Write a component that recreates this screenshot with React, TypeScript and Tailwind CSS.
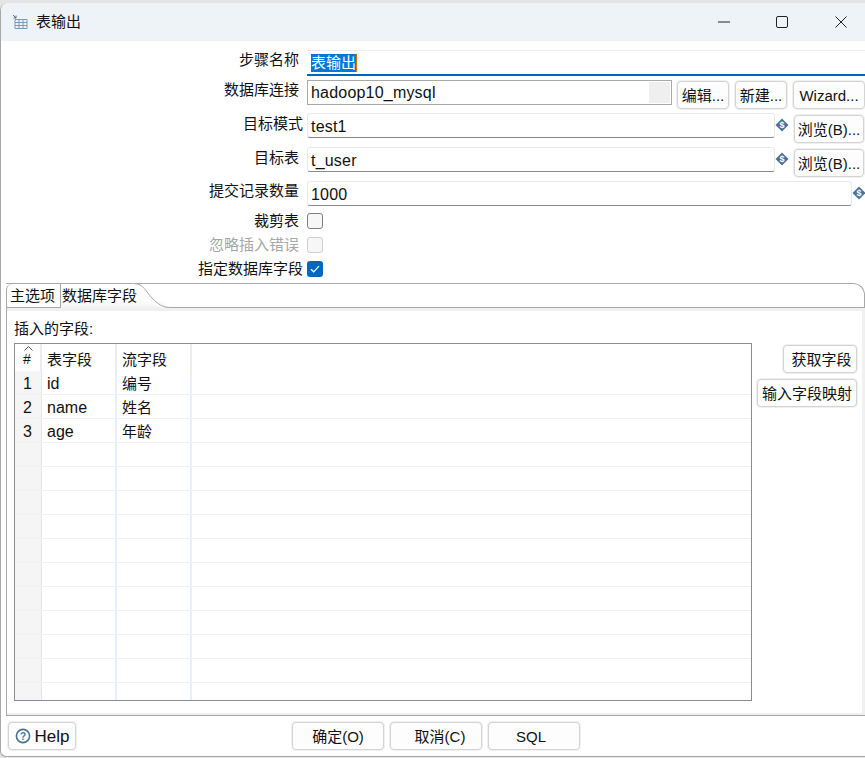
import React from "react";

const font = "font-['Liberation_Sans','Noto_Sans_CJK_SC',sans-serif]";

function Btn({ children, className = "" }: { children: React.ReactNode; className?: string }) {
  return (
    <button className={`h-[28px] shrink-0 rounded-[4px] border border-[#d4d4d4] bg-[#fdfdfd] text-[15px] text-[#111] leading-none whitespace-nowrap shadow-[0_0_0_1px_#f0f0f0] ${className}`}>
      {children}
    </button>
  );
}

function VarIcon({ className = "" }: { className?: string }) {
  return (
    <svg width="14" height="14" viewBox="0 0 14 14" className={`shrink-0 ${className}`}>
      <path d="M7 0.5 L13.5 7 L7 13.5 L0.5 7 Z" fill="#4a7396" />
      <text x="7" y="10.2" textAnchor="middle" fontSize="9" fontWeight="700" fill="#fff" fontFamily="Liberation Sans">$</text>
    </svg>
  );
}

function Label({ children, className = "pr-[8px]", muted = false }: { children: React.ReactNode; className?: string; muted?: boolean }) {
  return (
    <div className={`w-[306px] shrink-0 text-right text-[15px] leading-[20px] ${className} ${muted ? "text-[#a6a6a6]" : "text-[#111]"}`}>
      {children}
    </div>
  );
}

function Field({ value, className = "" }: { value: string; className?: string }) {
  return (
    <div className={`h-[25px] shrink-0 rounded-[3px] border border-[#e8e8e8] border-b-[#8a8a8a] bg-white pl-[3px] text-[16px] leading-[25px] tracking-[0.2px] text-[#111] ${className}`}>
      {value}
    </div>
  );
}

function Check({ state }: { state: "off" | "disabled" | "on" }) {
  if (state === "on") {
    return (
      <div className="flex h-[16px] w-[16px] items-center justify-center rounded-[3px] bg-[#0067c0]">
        <svg width="10" height="8" viewBox="0 0 10 8" fill="none" stroke="#fff" strokeWidth="1.2">
          <path d="M1 4.2 L3.7 6.8 L9 1.2" />
        </svg>
      </div>
    );
  }
  return (
    <div className={`h-[16px] w-[16px] rounded-[3px] border bg-[#f7f7f7] ${state === "off" ? "border-[#7f7f7f]" : "border-[#cfcfcf]"}`} />
  );
}

const rows = [
  ["1", "id", "编号"],
  ["2", "name", "姓名"],
  ["3", "age", "年龄"],
  ...Array.from({ length: 11 }, () => ["", "", ""]),
];

function Grid() {
  return (
    <div className="ml-[7px] h-[358px] w-[738px] shrink-0 overflow-hidden border border-[#8c8c96] bg-white">
      <div className="flex h-[27px] text-[15px] leading-[27px] text-[#111]">
        <div className="relative w-[27px] border-r-2 border-[#ececec] pl-[8px] pt-[2px] text-[14px]">
          <svg width="9" height="5" viewBox="0 0 9 5" fill="none" stroke="#555" className="absolute left-[9px] top-[2px]">
            <path d="M0.5 4.5 L4.5 0.5 L8.5 4.5" />
          </svg>
          #
        </div>
        <div className="w-[75px] border-r-2 border-[#ececec] pl-[5px] pt-[2px]">表字段</div>
        <div className="w-[75px] border-r-2 border-[#ececec] pl-[5px] pt-[2px]">流字段</div>
      </div>
      {rows.map((r, i) => (
        <div key={i} className="flex h-[24px] border-b border-[#edf1f5] text-[16px] leading-[25px] text-[#111]">
          <div className="w-[27px] border-r border-[#e6e6e6] bg-[#f5f5f5] pl-[8px]">{r[0]}</div>
          <div className="w-[75px] border-r-2 border-[#e9eff8] pl-[5px]">{r[1]}</div>
          <div className="w-[75px] border-r-2 border-[#e9eff8] pl-[5px] text-[15px]">{r[2]}</div>
        </div>
      ))}
    </div>
  );
}

export default function App() {
  return (
    <div className={`${font} h-[758px] w-[865px] overflow-hidden bg-[#e4e4e4] pt-[3px]`}>
      <div className="flex h-[754px] flex-col overflow-hidden rounded-tl-[8px] rounded-bl-[6px] border-b border-l border-[#a8a8a8] bg-white">
        <div className="flex h-[38px] shrink-0 items-center bg-[#eef3f8]">
          <svg width="16" height="16" viewBox="0 0 16 16" fill="none" className="ml-[11px]">
            <path d="M3 5.5 H15 V14.5 H3 Z M3 8.5 H15 M3 11.5 H15 M7 5.5 V14.5 M11 5.5 V14.5" stroke="#7d9ab5" strokeWidth="1" />
            <path d="M1 1 L4 4 M4 1.5 V4 H1.5" stroke="#4a6f8f" strokeWidth="1" />
          </svg>
          <span className="ml-[8px] text-[15px] text-[#111]">表输出</span>
          <svg width="12" height="2" viewBox="0 0 12 2" className="ml-auto">
            <rect width="12" height="1" y="0.5" fill="#222" />
          </svg>
          <svg width="12" height="12" viewBox="0 0 12 12" fill="none" className="ml-[46px]">
            <rect x="0.5" y="0.5" width="11" height="11" rx="1.5" stroke="#222" />
          </svg>
          <svg width="12" height="12" viewBox="0 0 12 12" fill="none" className="ml-[47px] mr-[18px]">
            <path d="M0.5 0.5 L11.5 11.5 M11.5 0.5 L0.5 11.5" stroke="#222" />
          </svg>
        </div>

        <div className="flex h-[39px] shrink-0 items-start pt-[9px]">
          <Label>步骤名称</Label>
          <div className="h-[26px] flex-1 border-t border-[#eeeeee] border-b-2 border-b-[#0067c0] pl-[4px] pt-[3px] text-[15px] leading-[18px]">
            <span className="inline-block border-r border-[#e07000] bg-[#0078d7] text-white">表输出</span>
          </div>
        </div>

        <div className="flex h-[33px] shrink-0 items-start">
          <Label>数据库连接</Label>
          <div className="flex h-[25px] w-[365px] shrink-0 items-stretch border border-[#a9a9a9] bg-white">
            <span className="flex-1 pl-[3px] text-[16px] leading-[23px] tracking-[0.2px] text-[#111]">hadoop10_mysql</span>
            <span className="my-[1px] mr-[1px] w-[21px] bg-[#efefef]" />
          </div>
          <Btn className="ml-[5px] mt-[1px] w-[52px]">编辑...</Btn>
          <Btn className="ml-[6px] mt-[1px] w-[52px]">新建...</Btn>
          <Btn className="ml-[6px] mt-[1px] w-[72px]">Wizard...</Btn>
        </div>

        <div className="flex h-[34px] shrink-0 items-start">
          <Label className="mt-[1px] pr-[4px]">目标模式</Label>
          <Field value="test1" className="w-[468px]" />
          <VarIcon className="mt-[5px]" />
          <Btn className="ml-[5px] mt-[2px] w-[70px]">浏览(B)...</Btn>
        </div>

        <div className="flex h-[34px] shrink-0 items-start">
          <Label className="mt-[1px] pr-[8px]">目标表</Label>
          <Field value="t_user" className="w-[468px]" />
          <VarIcon className="mt-[5px]" />
          <Btn className="ml-[5px] mt-[2px] w-[70px]">浏览(B)...</Btn>
        </div>

        <div className="flex h-[32px] shrink-0 items-start">
          <Label>提交记录数量</Label>
          <Field value="1000" className="w-[545px]" />
          <VarIcon className="mt-[5px]" />
        </div>

        <div className="flex h-[24px] shrink-0 items-start">
          <Label className="mt-[-2px] pr-[8px]">裁剪表</Label>
          <Check state="off" />
        </div>
        <div className="flex h-[24px] shrink-0 items-start">
          <Label className="mt-[-2px] pr-[8px]" muted>忽略插入错误</Label>
          <Check state="disabled" />
        </div>
        <div className="flex h-[22px] shrink-0 items-start">
          <Label className="mt-[-2px] pr-[4px]">指定数据库字段</Label>
          <Check state="on" />
        </div>

        <div className="ml-[5px] flex min-h-0 flex-1 flex-col">
          <div className="relative flex h-[25px] shrink-0 items-end rounded-tr-[12px] border-t border-r border-[#a8a8a8] text-[15px] leading-[24px] text-[#111]">
            <div className="h-[24px] w-[55px] shrink-0 rounded-tl-[6px] border-l border-r border-b border-[#a8a8a8] pl-[3px]">主选项</div>
            <div className="h-[24px] w-[104px] shrink-0 bg-gradient-to-b from-white from-70% to-[#f0f0f0] pl-[1px]">数据库字段</div>
            <div className="flex-1 self-end border-b border-[#a8a8a8]" />
            <svg width="40" height="25" viewBox="0 0 40 25" fill="none" className="absolute left-[125px] top-[-1px]">
              <path d="M1 0.5 C10 1 14 8 20 15 C26 22 30 24 39 24.5 H40 V25 H39 C28 25 22 22 16 15 C10 8 6 2 1 1 Z" fill="#fff" />
              <path d="M3 0.5 C13 1 15 9 21 15 C27 21 31 24.5 40 24.5" stroke="#a8a8a8" />
            </svg>
          </div>
          <div className="flex h-[408px] shrink-0 flex-col border-b border-l border-[#a8a8a8] bg-white shadow-[inset_0_3px_0_#f0f0f0,inset_-3px_0_0_#f0f0f0,inset_0_-2px_0_#f0f0f0]">
            <div className="shrink-0 pl-[7px] pt-[11px] text-[15px] leading-[20px] text-[#111]">插入的字段:</div>
            <div className="mt-[4px] flex items-start">
              <Grid />
              <div className="ml-[5px] mt-[2px] flex w-[100px] shrink-0 flex-col items-end gap-[6px]">
                <Btn className="w-[74px] pl-[3px]">获取字段</Btn>
                <Btn className="w-[100px]">输入字段映射</Btn>
              </div>
            </div>
          </div>
          <div className="flex flex-1 items-start pt-[6px]">
            <Btn className="ml-[2px] flex w-[68px] items-center justify-center gap-[4px] !text-[17px]">
              <svg width="16" height="16" viewBox="0 0 16 16" fill="none">
                <circle cx="8" cy="8" r="6.6" stroke="#4a7396" strokeWidth="1.6" />
                <text x="8" y="11.5" textAnchor="middle" fontSize="10" fontWeight="700" fill="#4a7396" fontFamily="Liberation Sans">?</text>
              </svg>
              Help
            </Btn>
            <Btn className="ml-[216px] w-[92px]">确定(O)</Btn>
            <Btn className="ml-[6px] w-[92px] pl-[8px]">取消(C)</Btn>
            <Btn className="ml-[6px] w-[92px] pr-[6px]">SQL</Btn>
          </div>
        </div>
      </div>
    </div>
  );
}
